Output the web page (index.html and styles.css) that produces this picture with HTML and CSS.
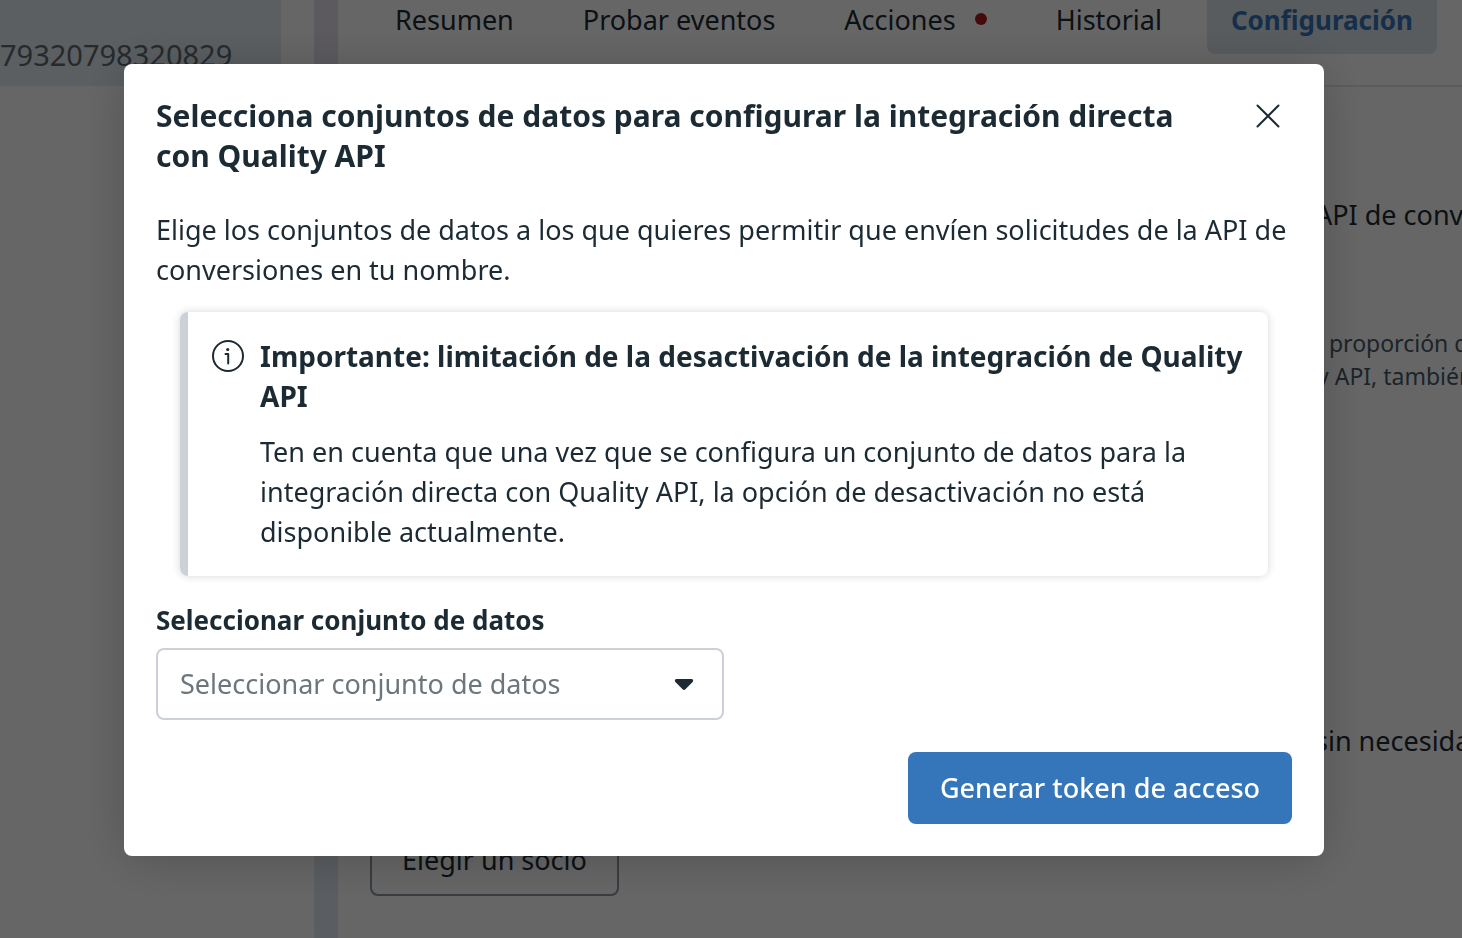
FILE: index.html
```html
<!DOCTYPE html>
<html lang="es">
<head>
  <meta charset="UTF-8">
  <meta name="viewport" content="width=device-width, initial-scale=1.0">
  <title>Configuración</title>
  <link rel="stylesheet" href="styles.css">
</head>
<body>
  <div class="page">
    <aside class="sidebar">
      <div class="dataset">79320798320829</div>
    </aside>
    <main class="content">
      <nav class="tabs">
        <a class="tab" href="#resumen">Resumen</a>
        <a class="tab" href="#probar">Probar eventos</a>
        <a class="tab" href="#acciones">Acciones <span class="dot"></span></a>
        <a class="tab" href="#historial">Historial</a>
        <a class="tab active" href="#configuracion">Configuración</a>
      </nav>
      <div class="settings">
        <p class="setting">API de conversiones</p>
        <p class="setting-note">&nbsp; proporción de<br>y API, también</p>
        <p class="setting setting-partner">sin necesidad</p>
        <button type="button" class="partner-btn">Elegir un socio</button>
      </div>
    </main>
  </div>

  <div class="overlay">
    <div class="modal" role="dialog" aria-modal="true" aria-labelledby="modalTitle">
      <div class="modal-header">
        <h2 id="modalTitle">Selecciona conjuntos de datos para configurar la integración directa con Quality API</h2>
        <button type="button" class="close-btn" aria-label="Cerrar">
          <svg width="24" height="24" viewBox="0 0 24 24" fill="none" stroke="currentColor" stroke-width="2" stroke-linecap="round">
            <path d="M1.5 1.5l21 21M22.5 1.5l-21 21"/>
          </svg>
        </button>
      </div>
      <p class="intro">Elige los conjuntos de datos a los que quieres permitir que envíen solicitudes de la API de conversiones en tu nombre.</p>

      <div class="notice">
        <svg class="notice-icon" width="32" height="32" viewBox="0 0 32 32" fill="none" stroke="currentColor" stroke-width="2">
          <circle cx="16" cy="16" r="15"/>
          <path d="M13.5 14h2.7v9.5" stroke-linecap="round" stroke-linejoin="round"/>
          <circle cx="15.7" cy="9.5" r="1.6" fill="currentColor" stroke="none"/>
        </svg>
        <div>
          <h3>Importante: limitación de la desactivación de la integración de Quality API</h3>
          <p>Ten en cuenta que una vez que se configura un conjunto de datos para la integración directa con Quality API, la opción de desactivación no está disponible actualmente.</p>
        </div>
      </div>

      <form class="dataset-form">
        <label for="dataset">Seleccionar conjunto de datos</label>
        <div class="select-wrap">
          <select id="dataset">
            <option>Seleccionar conjunto de datos</option>
          </select>
          <svg class="caret" width="20" height="14" viewBox="0 0 20 14" fill="currentColor">
            <path d="M2.5 1h15c1.6 0 2.2 1.7 1.1 2.9l-7.2 7.4c-.8.8-2 .8-2.8 0L1.4 3.9C.3 2.7.9 1 2.5 1z"/>
          </svg>
        </div>
        <button type="submit" class="submit-btn">Generar token de acceso</button>
      </form>
    </div>
  </div>
</body>
</html>
```

FILE: styles.css
```css
* { box-sizing: border-box; }
body { margin: 0; font-family: "Noto Sans", sans-serif; font-size: 27px; line-height: 40px; color: #1c2b33; background: #fff; overflow: hidden; }
h2, h3, p { margin: 0; }
button, select { font: inherit; color: inherit; cursor: pointer; }

.page { display: flex; height: 100vh; overflow: hidden; background: linear-gradient(#e6e0ec, #e2e8f0 40%, #e0e8f2); }
.sidebar { flex: 0 0 314px; padding-right: 33px; background: #fff; }
.dataset { height: 86px; padding-top: 35px; background: #e3edf3; color: #606a70; font-size: 29px; }
.content { flex: 1; min-width: 0; margin-left: 24px; background: #fff; overflow: hidden; }
.tabs { display: flex; gap: 21px; height: 87px; padding-left: 33px; border-bottom: 2px solid #e4e6e8; white-space: nowrap; }
.tab { height: 54px; padding: 0 24px; color: inherit; text-decoration: none; }
.tab.active { background: #dbe6ee; color: #3575b9; font-size: 26px; font-weight: 700; border-radius: 0 0 8px 8px; }
.dot { display: inline-block; width: 12px; height: 12px; margin-left: 12px; border-radius: 50%; background: #aa1c1c; vertical-align: 5px; }

.settings { padding: 108px 0 0 32px; white-space: nowrap; }
.setting { padding-left: 945px; }
.setting-note { padding: 92px 0 0 947px; font-size: 23px; line-height: 33px; color: #465a69; }
.setting-partner { padding-top: 328px; }
.partner-btn { height: 72px; margin-top: 63px; padding: 0 30px; background: #fff; border: 2px solid #8d99a3; border-radius: 8px; }

.overlay { position: fixed; inset: 0; padding: 64px 138px 0 124px; background: rgba(0, 0, 0, 0.6); }
.modal { padding: 32px; background: #fff; border-radius: 8px; box-shadow: 0 4px 48px rgba(0, 0, 0, 0.2); }
.modal-header { display: flex; align-items: flex-start; justify-content: space-between; gap: 64px; }
.modal-header h2 { font-size: 30px; line-height: 40px; }
.close-btn { display: flex; margin: 8px 12px 0 0; padding: 0; background: none; border: none; }
.intro { margin-top: 34px; }

.notice { display: flex; gap: 16px; margin: 22px 24px 24px; padding: 24px; border-left: 8px solid #ccd0d7; border-radius: 8px; box-shadow: 0 0 8px rgba(0, 0, 0, 0.16); }
.notice-icon { flex: none; margin-top: 4px; }
.notice h3 { font-size: 28px; line-height: 40px; }
.notice p { margin-top: 16px; }

.dataset-form { display: flex; flex-direction: column; align-items: flex-start; }
.dataset-form label { font-size: 26px; font-weight: 700; }
.select-wrap { position: relative; width: 50%; margin-top: 8px; }
.select-wrap select { appearance: none; width: 100%; height: 72px; padding: 0 22px; background: #fff; color: #6b767d; border: 2px solid #ccd0d7; border-radius: 8px; }
.caret { position: absolute; right: 30px; top: 30px; pointer-events: none; }
.submit-btn { align-self: flex-end; height: 72px; margin-top: 32px; padding: 0 32px; background: #3575b9; color: #fff; border: none; border-radius: 8px; font-weight: 500; }
```
